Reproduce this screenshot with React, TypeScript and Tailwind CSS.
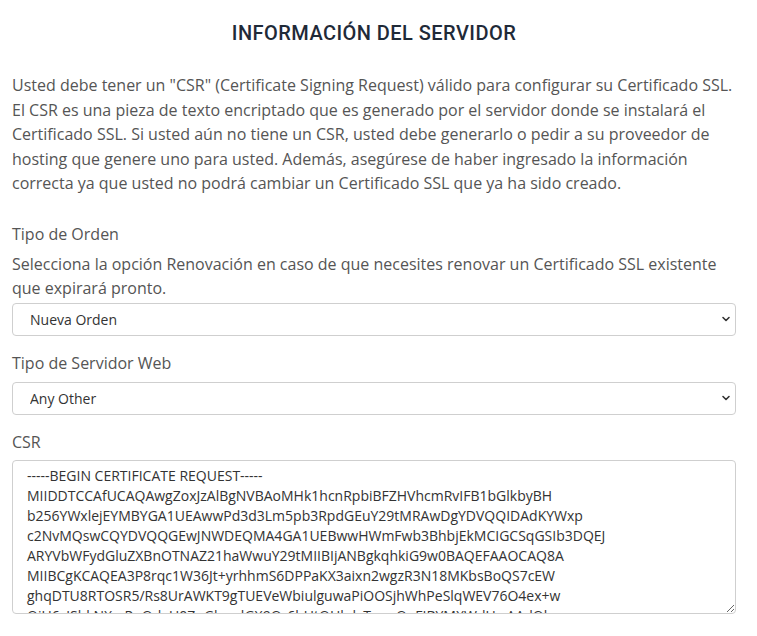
import { ChangeEvent, useState } from "react";

const CSR_TEXT = `-----BEGIN CERTIFICATE REQUEST-----
MIIDDTCCAfUCAQAwgZoxJzAlBgNVBAoMHk1hcnRpbiBFZHVhcmRvIFB1bGlkbyBH
b256YWxlejEYMBYGA1UEAwwPd3d3Lm5pb3RpdGEuY29tMRAwDgYDVQQIDAdKYWxp
c2NvMQswCQYDVQQGEwJNWDEQMA4GA1UEBwwHWmFwb3BhbjEkMCIGCSqGSIb3DQEJ
ARYVbWFydGluZXBnOTNAZ21haWwuY29tMIIBIjANBgkqhkiG9w0BAQEFAAOCAQ8A
MIIBCgKCAQEA3P8rqc1W36Jt+yrhhmS6DPPaKX3aixn2wgzR3N18MKbsBoQS7cEW
ghqDTU8RTOSR5/Rs8UrAWKT9gTUEVeWbiulguwaPiOOSjhWhPeSlqWEV76O4ex+w
OiU6zJShkNXsrRpQdeU0ZpGkqwlGX9Qr6bUtOHkdvTzwgQnFIBYMXWdUwAAdQlwe
k3Tz8bL0pQyVx2mN7cR4sWfHjE1gK9aZuD6oYtI5nBvLrP3qMxCeSdFgHiJ8wUoA
-----END CERTIFICATE REQUEST-----`;

function Chevron() {
  return (
    <svg
      className="pointer-events-none absolute right-[5px] top-1/2 -translate-y-1/2"
      width="10"
      height="10"
      viewBox="0 0 10 10"
      fill="none"
    >
      <path d="M2 3.5 L5 6.5 L8 3.5" stroke="#333" strokeWidth="1.6" strokeLinecap="round" strokeLinejoin="round" />
    </svg>
  );
}

function SelectField({
  value,
  options,
  onChange,
}: {
  value: string;
  options: string[];
  onChange: (v: string) => void;
}) {
  return (
    <div className="relative">
      <select
        value={value}
        onChange={(e: ChangeEvent<HTMLSelectElement>) => onChange(e.target.value)}
        className="block h-[33px] w-full appearance-none rounded-[4px] border border-[#cfcfcf] bg-white pl-[17px] pr-8 text-[14px] text-[#333] outline-none"
      >
        {options.map((o) => (
          <option key={o} value={o}>
            {o}
          </option>
        ))}
      </select>
      <Chevron />
    </div>
  );
}

export default function App() {
  const [orderType, setOrderType] = useState("Nueva Orden");
  const [serverType, setServerType] = useState("Any Other");
  const [csr, setCsr] = useState(CSR_TEXT);

  return (
    <div className="min-h-screen bg-white font-['Open_Sans',sans-serif] text-[#555]">
      <div className="ml-3 w-[724px]">
        {/* Title */}
        <h2 className="pt-[19px] text-center font-['Roboto',sans-serif] text-[20px] font-medium leading-[28px] tracking-[0.45px] text-[#1f2a38]">
          INFORMACIÓN DEL SERVIDOR
        </h2>

        {/* Intro */}
        <p className="mt-[26px] text-[16px] leading-[24.5px]">
          Usted debe tener un "CSR" (Certificate Signing Request) válido para configurar su Certificado SSL. El CSR es
          una pieza de texto encriptado que es generado por el servidor donde se instalará el Certificado SSL. Si usted
          aún no tiene un CSR, usted debe generarlo o pedir a su proveedor de hosting que genere uno para usted. Además,
          asegúrese de haber ingresado la información correcta ya que usted no podrá cambiar un Certificado SSL que ya ha
          sido creado.
        </p>

        {/* Tipo de Orden */}
        <label className="mt-[26px] block text-[16px] leading-[24px]">Tipo de Orden</label>
        <p className="mt-[6px] text-[16px] leading-[24.5px]">
          Selecciona la opción Renovación en caso de que necesites renovar un Certificado SSL existente que expirará
          pronto.
        </p>
        <div className="mt-[2px]">
          <SelectField value={orderType} options={["Nueva Orden", "Renovación"]} onChange={setOrderType} />
        </div>

        {/* Tipo de Servidor Web */}
        <label className="mt-[15px] block text-[16px] leading-[24px]">Tipo de Servidor Web</label>
        <div className="mt-[7px]">
          <SelectField
            value={serverType}
            options={["Any Other", "Apache", "Microsoft IIS", "Nginx", "Tomcat"]}
            onChange={setServerType}
          />
        </div>

        {/* CSR */}
        <label className="mt-[15px] block text-[16px] leading-[24px]">CSR</label>
        <textarea
          value={csr}
          onChange={(e) => setCsr(e.target.value)}
          spellCheck={false}
          className="mt-[6px] block h-[154px] w-full resize-y overflow-hidden whitespace-pre rounded-[4px] border border-[#cfcfcf] bg-white px-[14px] pt-[5px] text-[14px] leading-[20px] text-[#333] outline-none"
        />
      </div>
    </div>
  );
}
